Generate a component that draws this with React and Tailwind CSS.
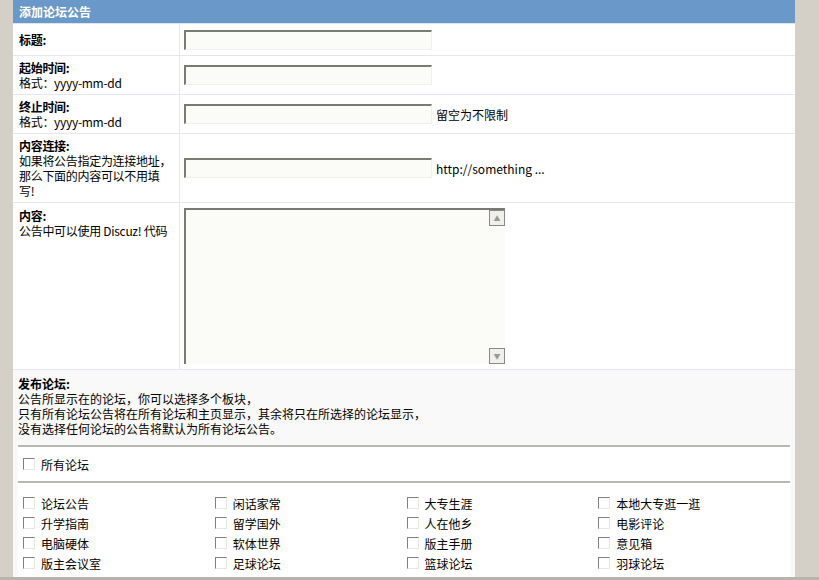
const F = { fontFamily: '"Noto Sans CJK SC","DejaVu Sans",sans-serif' };
const Inp = () => <div className="w-[248px] h-[20px] bg-[#fbfbf8] border-t-2 border-l-2 border-[#7a7a70] border-r border-b border-r-[#f0f0e8] border-b-[#f0f0e8]" />;
const Cb = ({ t }) => (
  <div className="flex items-center h-[20px] gap-[6px]">
    <div className="w-[12px] h-[12px] bg-white border-t border-l border-[#808080] border-r-[#e8e8e0] border-b-[#e8e8e0] border-r border-b" />
    <span>{t}</span>
  </div>
);
const forums = ["论坛公告","闲话家常","大专生涯","本地大专逛一逛","升学指南","留学国外","人在他乡","电影评论","电脑硬体","软体世界","版主手册","意见箱","版主会议室","足球论坛","篮球论坛","羽球论坛","武术话道","投资理财","时事论坛","网页设计"];
export default function App() {
  return (
    <div style={F} className="w-[819px] h-[580px] overflow-hidden bg-[#d4d0c8] flex flex-col text-[12px] text-black leading-[15px]">
      <div className="flex h-[577px] shrink-0">
      <div className="w-[13px] shrink-0" />
      <div className="w-[782px] bg-white flex flex-col">
        <div className="h-[24px] shrink-0 bg-[#6a98c8] text-white font-bold px-[6px] flex items-center border-b border-[#dde6f0]">添加论坛公告</div>
        {[
          [32, <><b>标题:</b></>, null],
          [39, <><b>起始时间:</b><br/>格式：yyyy-mm-dd</>, null],
          [39, <><b>终止时间:</b><br/>格式：yyyy-mm-dd</>, "留空为不限制"],
          [69, <><b>内容连接:</b><br/>如果将公告指定为连接地址，<br/>那么下面的内容可以不用填<br/>写!</>, "http://something ..."],
        ].map(([h, l, s], i) => (
          <div key={i} style={{ height: h }} className="shrink-0 flex border-b border-[#e3e8ef]">
            <div className="w-[167px] shrink-0 border-r border-[#e3e8ef] px-[6px] flex items-center whitespace-nowrap tracking-[-0.3px]">
              <div>{l}</div>
            </div>
            <div className="flex items-center pl-[4px] gap-[4px]"><Inp />{s && <span>{s}</span>}</div>
          </div>
        ))}
        <div className="h-[167px] shrink-0 flex border-b border-[#e3e8ef]">
          <div className="w-[167px] shrink-0 border-r border-[#e3e8ef] px-[6px] pt-[5px] whitespace-nowrap tracking-[-0.3px]"><b>内容:</b><br/>公告中可以使用 Discuz! 代码</div>
          <div className="pl-[4px] pt-[5px]">
            <div className="w-[321px] h-[156px] bg-[#fbfbf8] border-t-2 border-l-2 border-[#7a7a70] flex justify-end">
              <div className="w-[16px] h-full bg-[#fbfbf8] flex flex-col justify-between">
                <div className="h-[16px] border border-[#888] bg-[#f0f0ea] text-[7px] text-[#999] flex items-center justify-center">▲</div>
                <div className="h-[16px] border border-[#888] bg-[#f0f0ea] text-[7px] text-[#999] flex items-center justify-center">▼</div>
              </div>
            </div>
          </div>
        </div>
        <div className="flex-1 bg-[#f9f9f9] px-[5px] pt-[6px]">
          <b>发布论坛:</b>
          <div>公告所显示在的论坛，你可以选择多个板块，<br/>只有所有论坛公告将在所有论坛和主页显示，其余将只在所选择的论坛显示，<br/>没有选择任何论坛的公告将默认为所有论坛公告。</div>
          <div className="mt-[9px] border-t-2 border-[#b8b8b0]" />
          <div className="h-[34px] flex items-center pl-[5px] bg-white"><Cb t="所有论坛" /></div>
          <div className="border-t-2 border-[#b8b8b0]" />
          <div className="grid grid-cols-4 pl-[5px] pt-[10px] bg-white">
            {forums.map(f => <Cb key={f} t={f} />)}
          </div>
        </div>
      </div>
      </div>
      <div className="h-[3px] bg-[#b8b4ac]" />
    </div>
  );
}
